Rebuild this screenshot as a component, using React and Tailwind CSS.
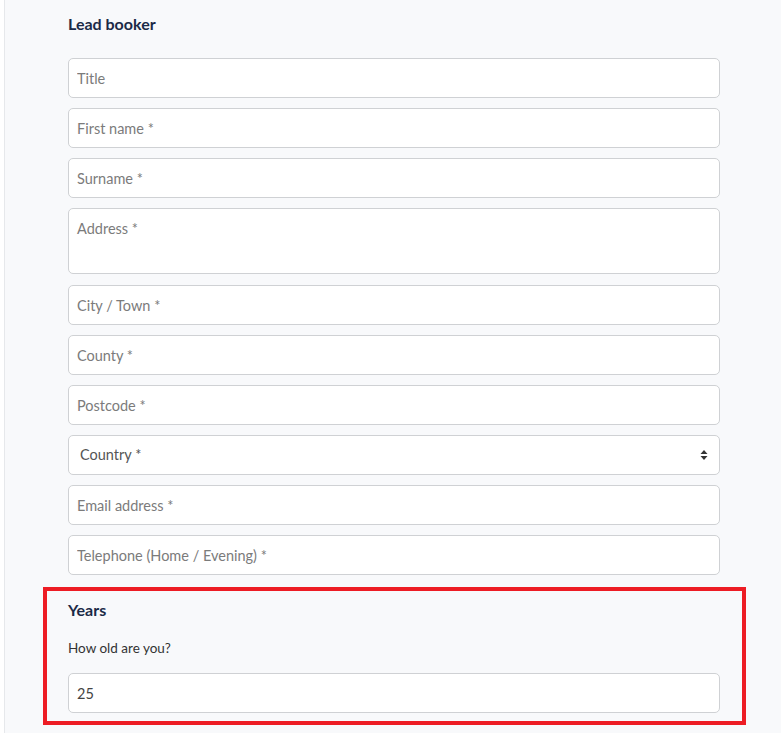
import { useState } from 'react';

const fields = [
  { name: 'title', label: 'Title' },
  { name: 'firstName', label: 'First name *' },
  { name: 'surname', label: 'Surname *' },
];

const fields2 = [
  { name: 'city', label: 'City / Town *' },
  { name: 'county', label: 'County *' },
  { name: 'postcode', label: 'Postcode *' },
];

const inputClass =
  'block w-full h-10 px-2 bg-white border border-[#cfd1d4] rounded-[5px] text-[14.5px] text-[#444] placeholder:text-[#7b7b7b] outline-none';

export default function App() {
  const [age, setAge] = useState('25');

  return (
    <div className="min-h-screen bg-white pl-1" style={{ fontFamily: 'Lato, "Open Sans", sans-serif' }}>
      <div className="min-h-[733px] bg-[#f8f9fb] border-l border-[#e6e8eb] pl-[63px] pr-[61px] pt-[14px]">
        <h2 className="text-[16px] leading-5 font-bold text-[#1b2a47]">Lead booker</h2>

        <div className="mt-6 flex flex-col gap-[10px]">
          {fields.map(f => (
            <input key={f.name} name={f.name} placeholder={f.label} className={inputClass} />
          ))}
          <textarea
            name="address"
            placeholder="Address *"
            className="block w-full h-[66px] mb-[1px] px-2 py-[10px] bg-white border border-[#cfd1d4] rounded-[5px] text-[14.5px] leading-5 text-[#444] placeholder:text-[#7b7b7b] outline-none resize-none"
          />
          {fields2.map(f => (
            <input key={f.name} name={f.name} placeholder={f.label} className={inputClass} />
          ))}

          {/* Country select */}
          <div className="relative">
            <select
              name="country"
              defaultValue=""
              className="block w-full h-10 pl-[11px] pr-8 bg-white border border-[#cfd1d4] rounded-[5px] text-[14.5px] text-[#555] outline-none appearance-none"
            >
              <option value="">Country *</option>
              <option value="uk">United Kingdom</option>
            </select>
            <svg
              className="absolute right-[12px] top-1/2 -translate-y-1/2 pointer-events-none"
              width="8"
              height="12"
              viewBox="0 0 8 12"
            >
              <path d="M4 1 L7.5 5 H0.5 Z" fill="#333" />
              <path d="M4 11 L7.5 7 H0.5 Z" fill="#333" />
            </svg>
          </div>

          <input name="email" placeholder="Email address *" className={inputClass} />
          <input name="telephone" placeholder="Telephone (Home / Evening) *" className={inputClass} />
        </div>

        {/* Years */}
        <div className="mt-3 -ml-[25px] -mr-[26px] border-4 border-[#ed1c24] pl-[21px] pr-[22px] pt-[9px] pb-2">
          <h3 className="text-[16px] leading-5 font-bold text-[#1b2a47]">Years</h3>
          <p className="mt-5 text-[13.5px] leading-4 text-[#333]">How old are you?</p>
          <input
            name="age"
            value={age}
            onChange={e => setAge(e.target.value)}
            className={inputClass + ' mt-[17px]'}
          />
        </div>
      </div>
    </div>
  );
}
